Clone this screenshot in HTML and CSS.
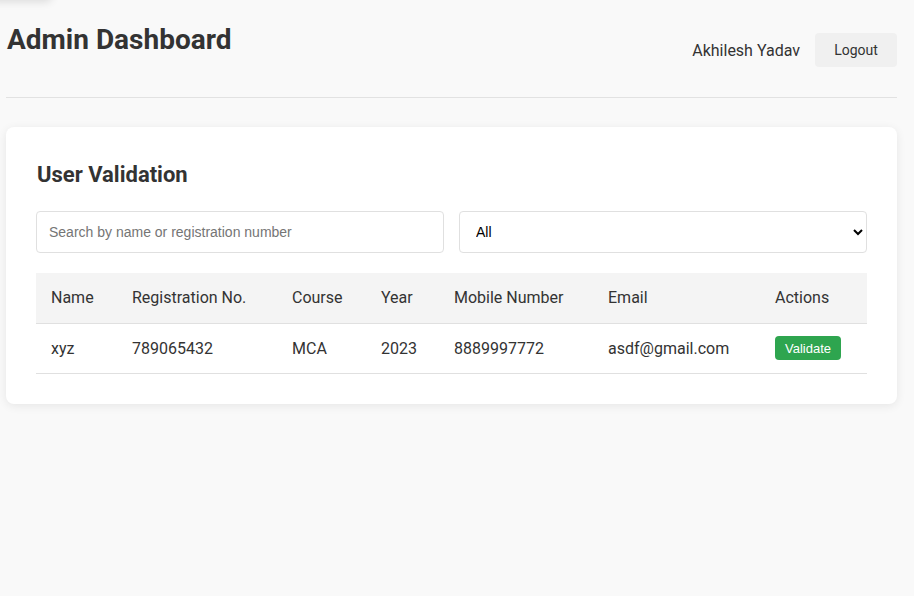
FILE: index.html
```html
<!DOCTYPE html>
<html lang="en">
<head>
<meta charset="utf-8">
<title>Admin Dashboard</title>
<link rel="stylesheet" href="styles.css">
</head>
<body>
<div class="ghost"></div>
<div class="page">
  <header class="header">
    <h1 class="title">Admin Dashboard</h1>
    <div class="user">
      <span class="user-name">Akhilesh Yadav</span>
      <button class="logout">Logout</button>
    </div>
  </header>
  <section class="card">
    <h2 class="card-title">User Validation</h2>
    <div class="filters">
      <input class="search" type="text" placeholder="Search by name or registration number">
      <select class="select">
        <option>All</option>
      </select>
    </div>
    <table class="table">
      <colgroup>
        <col class="c-name"><col class="c-reg"><col class="c-course"><col class="c-year"><col class="c-mobile"><col class="c-email"><col class="c-actions">
      </colgroup>
      <thead>
        <tr>
          <th>Name</th>
          <th>Registration No.</th>
          <th>Course</th>
          <th>Year</th>
          <th>Mobile Number</th>
          <th>Email</th>
          <th>Actions</th>
        </tr>
      </thead>
      <tbody>
        <tr>
          <td>xyz</td>
          <td>789065432</td>
          <td>MCA</td>
          <td>2023</td>
          <td>8889997772</td>
          <td>asdf@gmail.com</td>
          <td><button class="validate">Validate</button></td>
        </tr>
      </tbody>
    </table>
  </section>
</div>
</body>
</html>
```
FILE: styles.css
```css
* { box-sizing: border-box; }
html, body { margin: 0; padding: 0; }
body {
  background: #f9f9f9;
  font-family: Roboto, "Liberation Sans", Arial, sans-serif;
  color: #333;
  position: relative;
  min-height: 596px;
}
.ghost {
  position: absolute;
  top: -40px;
  left: -10px;
  width: 62px;
  height: 40px;
  background: #f9f9f9;
  box-shadow: 0 2px 8px rgba(0,0,0,0.12);
  border-radius: 6px;
}
.page {
  width: 891px;
  margin-left: 6px;
  padding-top: 22px;
}
.header {
  display: flex;
  justify-content: space-between;
  align-items: flex-start;
  border-bottom: 1px solid #e2e2e2;
  height: 76px;
  margin-bottom: 29px;
  padding-left: 1px;
}
.title {
  margin: 0;
  font-size: 28px;
  font-weight: 700;
  line-height: 36px;
  color: #333;
}
.user {
  display: flex;
  align-items: center;
  gap: 15px;
  margin-top: 11px;
}
.user-name {
  font-size: 16px;
  color: #333;
}
.logout {
  font-family: Roboto, "Liberation Sans", Arial, sans-serif;
  font-size: 14px;
  color: #333;
  background: #f0f0f0;
  border: none;
  border-radius: 4px;
  width: 82px;
  height: 34px;
  padding: 0;
  cursor: pointer;
}
.card {
  background: #fff;
  border-radius: 8px;
  box-shadow: 0 2px 10px rgba(0,0,0,0.08);
  padding: 30px;
}
.card-title {
  margin: 0 0 20px 1px;
  font-size: 22px;
  font-weight: 700;
  line-height: 34px;
  padding-top: 1px;
  height: 34px;
  color: #333;
}
.filters {
  display: grid;
  grid-template-columns: minmax(0, 1fr) minmax(0, 1fr);
  gap: 15px;
  margin-bottom: 20px;
}
.search {
  width: 100%;
  height: 42px;
  border: 1px solid #e0e0e0;
  border-radius: 4px;
  padding: 0 12px;
  font-family: "Liberation Sans", Arial, sans-serif;
  font-size: 14px;
  color: #333;
  background: #fff;
}
.search::placeholder { color: #757575; }
.select {
  width: 100%;
  height: 42px;
  border: 1px solid #e0e0e0;
  border-radius: 4px;
  padding: 0 12px;
  font-family: "Liberation Sans", Arial, sans-serif;
  font-size: 14px;
  color: #000;
  background: #fff;
}
.table {
  width: 100%;
  border-collapse: collapse;
  table-layout: fixed;
  font-size: 16px;
}
.c-name { width: 81px; }
.c-reg { width: 160px; }
.c-course { width: 89px; }
.c-year { width: 73px; }
.c-mobile { width: 154px; }
.c-email { width: 167px; }
.c-actions { width: auto; }
.table th, .table td {
  text-align: left;
  padding: 0 15px;
  height: 50px;
  border-bottom: 1px solid #e0e0e0;
  font-weight: 400;
  color: #333;
  white-space: nowrap;
}
.table th {
  background: #f4f4f4;
}
.validate {
  background: #2ea54f;
  color: #fff;
  border: none;
  border-radius: 4px;
  width: 66px;
  height: 24px;
  padding: 0;
  font-family: "Liberation Sans", Arial, sans-serif;
  font-size: 13px;
  cursor: pointer;
  vertical-align: middle;
}
```
